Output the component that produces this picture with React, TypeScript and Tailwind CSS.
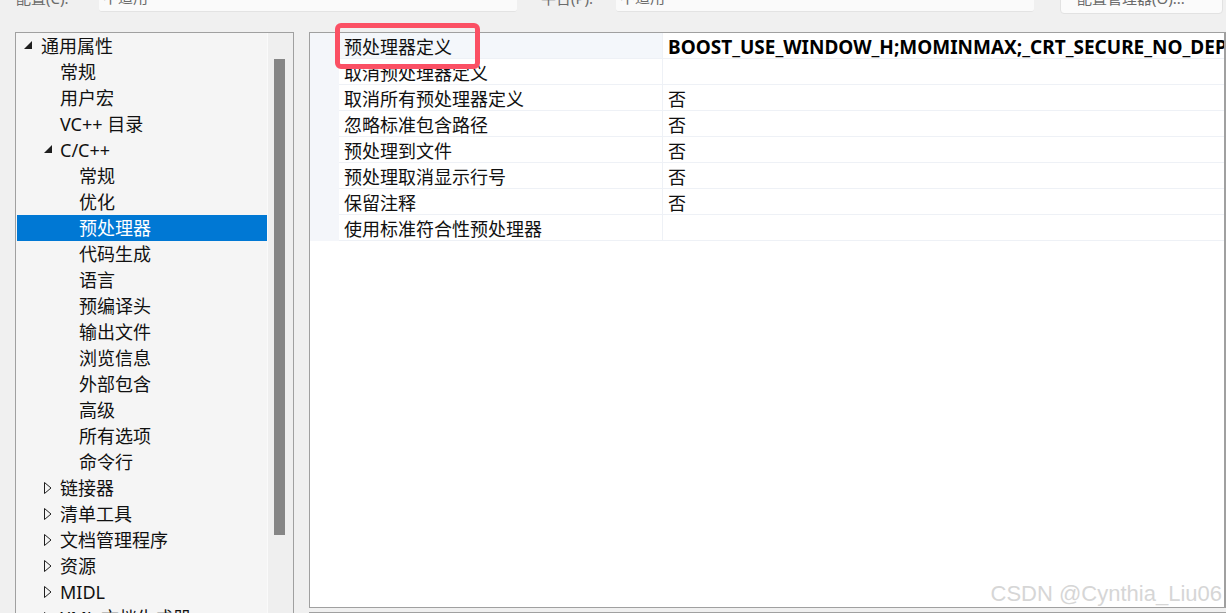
import React from "react";

type TreeItem = {
  label: string;
  level: 0 | 1 | 2;
  arrow?: "open" | "closed";
  selected?: boolean;
};

const TREE: TreeItem[] = [
  { label: "通用属性", level: 0, arrow: "open" },
  { label: "常规", level: 1 },
  { label: "用户宏", level: 1 },
  { label: "VC++ 目录", level: 1 },
  { label: "C/C++", level: 1, arrow: "open" },
  { label: "常规", level: 2 },
  { label: "优化", level: 2 },
  { label: "预处理器", level: 2, selected: true },
  { label: "代码生成", level: 2 },
  { label: "语言", level: 2 },
  { label: "预编译头", level: 2 },
  { label: "输出文件", level: 2 },
  { label: "浏览信息", level: 2 },
  { label: "外部包含", level: 2 },
  { label: "高级", level: 2 },
  { label: "所有选项", level: 2 },
  { label: "命令行", level: 2 },
  { label: "链接器", level: 1, arrow: "closed" },
  { label: "清单工具", level: 1, arrow: "closed" },
  { label: "文档管理程序", level: 1, arrow: "closed" },
  { label: "资源", level: 1, arrow: "closed" },
  { label: "MIDL", level: 1, arrow: "closed" },
  { label: "XML 文档生成器", level: 1, arrow: "closed" },
];

const PROPS: { name: string; value: string; bold?: boolean }[] = [
  {
    name: "预处理器定义",
    value: "BOOST_USE_WINDOW_H;MOMINMAX;_CRT_SECURE_NO_DEPRECATE;_SCL_SECURE_NO_WARNINGS",
    bold: true,
  },
  { name: "取消预处理器定义", value: "" },
  { name: "取消所有预处理器定义", value: "否" },
  { name: "忽略标准包含路径", value: "否" },
  { name: "预处理到文件", value: "否" },
  { name: "预处理取消显示行号", value: "否" },
  { name: "保留注释", value: "否" },
  { name: "使用标准符合性预处理器", value: "" },
];

const FONT = "font-['Noto_Sans','Noto_Sans_CJK_SC',sans-serif]";

function Arrow({ kind }: { kind: "open" | "closed" }) {
  if (kind === "open") {
    return (
      <svg width="8" height="8" viewBox="0 0 8 8" className="mt-[-2px]">
        <polygon points="8,0 8,8 0,8" fill="#1e1e1e" />
      </svg>
    );
  }
  return (
    <svg width="8" height="12" viewBox="0 0 8 12">
      <polygon points="0.5,0.5 7,6 0.5,11.5" fill="none" stroke="#1e1e1e" strokeWidth="1" />
    </svg>
  );
}

function TreeRow({ item }: { item: TreeItem }) {
  const textLeft = item.level === 0 ? "pl-[24px]" : item.level === 1 ? "pl-[43px]" : "pl-[62px]";
  const arrowLeft = item.level === 0 ? "left-[7px]" : "left-[27px]";
  return (
    <div
      className={`relative flex h-[26px] items-center whitespace-nowrap ${textLeft} pt-[1px] text-[18px] leading-[25px] ${
        item.selected ? "bg-[#0078d4] text-white" : "text-[#111]"
      }`}
    >
      {item.arrow && (
        <span className={`absolute top-0 flex h-[26px] items-center ${arrowLeft}`}>
          <Arrow kind={item.arrow} />
        </span>
      )}
      {item.label}
    </div>
  );
}

export default function App() {
  return (
    <div className={`relative h-[613px] w-[1226px] overflow-hidden bg-[#f0f0f0] ${FONT}`}>
      {/* top settings bar, mostly scrolled off */}
      <div className="mt-[-16px] flex h-[28px] items-end text-[15px] text-[#6b6b6b]">
        <span className="ml-[16px] w-[83px] shrink-0 leading-[28px]">配置(C):</span>
        <div className="h-[28px] w-[418px] shrink-0 rounded-b-[3px] border-b border-[#e3e3e3] bg-[#fafafa] pl-[4px] leading-[26px]">
          不适用
        </div>
        <span className="ml-[24px] w-[75px] shrink-0 leading-[28px]">平台(P):</span>
        <div className="h-[28px] w-[418px] shrink-0 rounded-b-[3px] border-b border-[#e3e3e3] bg-[#fafafa] pl-[4px] leading-[26px]">
          不适用
        </div>
        <div className="mb-[-2px] ml-[26px] h-[30px] w-[163px] shrink-0 rounded-[4px] border border-[#e2e2e2] bg-[#fbfbfb] pl-[16px] leading-[26px]">
          配置管理器(O)...
        </div>
      </div>

      <div className="mt-[20px] flex h-[600px] items-start">
        {/* tree panel */}
        <div className="ml-[15px] flex h-[600px] w-[279px] shrink-0 border border-[#a0a0a0] bg-[#f5f5f5]">
          <div className="min-w-0 flex-1 overflow-hidden pl-[1px]">
            {TREE.map((item, i) => (
              <TreeRow key={i} item={item} />
            ))}
          </div>
          <div className="w-[26px] shrink-0 border-l border-[#fafafa] bg-[#efefef] pl-[6px] pt-[26px]">
            <div className="h-[476px] w-[11px] bg-[#868686]" />
          </div>
        </div>

        {/* property grid */}
        <div className="ml-[15px] flex min-w-0 flex-1 flex-col">
          <div className="h-[576px] border border-r-[2px] border-[#a0a0a0] bg-white">
            <div className="flex">
              <div className="w-[29px] shrink-0 bg-[#f4f6fa]" />
              <div className="min-w-0 flex-1">
                {PROPS.map((p, i) => (
                  <div
                    key={i}
                    className={`flex h-[26px] border-b border-[#eef1f6] text-[18px] leading-[22px] ${
                      i === 0 ? "bg-[#f4f7fb]" : ""
                    }`}
                  >
                    <div className="w-[324px] shrink-0 border-r border-[#eef1f6] pl-[5px] pt-[3px] text-[#111]">
                      {p.name}
                    </div>
                    <div
                      className={`min-w-0 flex-1 overflow-hidden whitespace-nowrap bg-white pl-[5px] pt-[3px] ${
                        p.bold ? "text-[19px] font-bold text-black" : "text-[#111]"
                      }`}
                    >
                      {p.value}
                    </div>
                  </div>
                ))}
              </div>
            </div>
          </div>
          <div className="mt-[4px] h-[20px] border-t-[2px] border-[#a0a0a0]" />
        </div>
      </div>

      {/* red annotation box */}
      <div className="absolute left-[335px] top-[23px] h-[46px] w-[145px] rounded-[6px] border-[5px] border-[#fb5064]" />

      {/* watermark */}
      <div className="absolute right-[4px] top-[577px] font-['Liberation_Sans',sans-serif] text-[22px] text-[#d6d6d6] [text-shadow:1px_1px_0_#ffffff]">
        CSDN @Cynthia_Liu06
      </div>
    </div>
  );
}
